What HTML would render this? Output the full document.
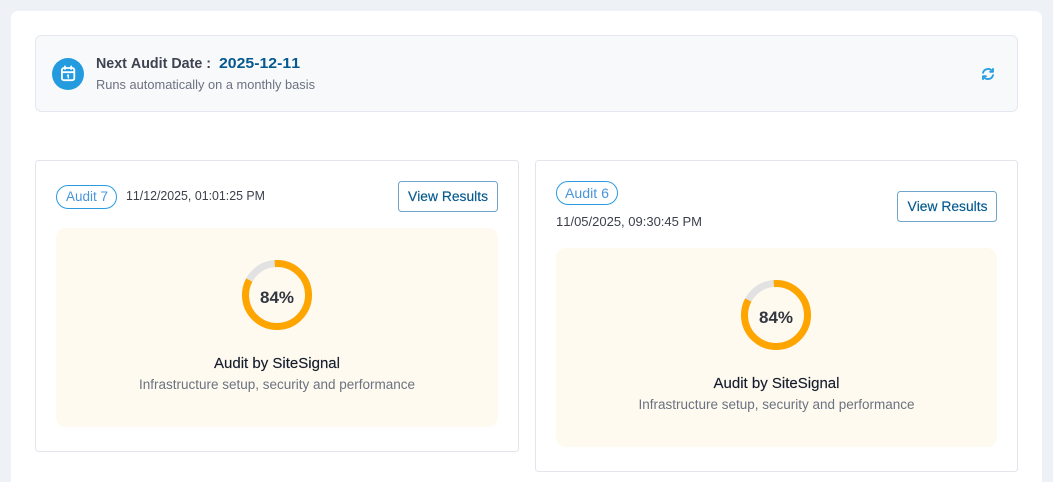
<!DOCTYPE html>
<html lang="en">
<head>
<meta charset="utf-8">
<title>Audits</title>
<style>
html,body{margin:0;padding:0;width:1053px;height:482px;overflow:hidden;background:#eef1f6;font-family:"Liberation Sans",sans-serif}
svg{position:absolute;left:0;top:0;display:block}
text{font-family:"Liberation Sans",sans-serif;font-kerning:none}
</style>
</head>
<body>
<svg width="1053" height="482" viewBox="0 0 1053 482" xmlns="http://www.w3.org/2000/svg">
  <rect x="11" y="11" width="1031" height="490" rx="7" fill="#fff"/>

  <!-- Header banner -->
  <rect x="35.5" y="35.5" width="982" height="76" rx="6" fill="#f8f9fb" stroke="#e4e7ef"/>
  <circle cx="68" cy="74" r="16" fill="#249bdf"/>
  <g fill="none" stroke="#fff" stroke-width="1.8" stroke-linecap="round" stroke-linejoin="round">
    <rect x="61.9" y="68" width="12.4" height="12.2" rx="2"/>
    <path d="M61.9 72.2H74.3M65 66.4V69M71.2 66.4V69" />
    <path d="M67.5 75.5L68.3 75V77.8" stroke-width="1.5"/>
  </g>
  <text x="96" y="68" font-size="14.5" font-weight="700" fill="#3d4350" textLength="115" lengthAdjust="spacingAndGlyphs">Next Audit Date :</text>
  <text x="219" y="68" font-size="15" font-weight="700" fill="#04598f" textLength="81" lengthAdjust="spacingAndGlyphs">2025-12-11</text>
  <text x="96" y="89" font-size="13" fill="#6b7280" textLength="219" lengthAdjust="spacingAndGlyphs">Runs automatically on a monthly basis</text>
  <g fill="none" stroke="#2ba0e2" stroke-width="1.9" stroke-linecap="round" stroke-linejoin="round">
    <path d="M983 72.8A5.2 5.2 0 0 1 992.4 71.4"/>
    <path d="M993 68.9V71.8H990.1"/>
    <path d="M993 75.2A5.2 5.2 0 0 1 983.6 76.6"/>
    <path d="M983 79.1V76.2H985.9"/>
  </g>

  <!-- Card 1 -->
  <rect x="35.5" y="160.5" width="483" height="291" rx="3" fill="#fff" stroke="#e2e5ec"/>
  <rect x="56.5" y="185.5" width="60" height="23" rx="11.5" fill="#fff" stroke="#2a9be0"/>
  <text x="66" y="201" font-size="13.5" fill="#4a94da" textLength="42" lengthAdjust="spacingAndGlyphs">Audit 7</text>
  <text x="126" y="200" font-size="13" fill="#3c414b" textLength="139" lengthAdjust="spacingAndGlyphs">11/12/2025, 01:01:25 PM</text>
  <rect x="398.5" y="181.5" width="99" height="30" rx="3" fill="#fff" stroke="#6fa5cb"/>
  <text x="408" y="201" font-size="13.5" fill="#04598f" stroke="#04598f" stroke-width=".15" textLength="80" lengthAdjust="spacingAndGlyphs">View Results</text>
  <rect x="56" y="228" width="442" height="199" rx="10" fill="#fffaef"/>
  <circle cx="277" cy="295" r="31.5" fill="none" stroke="#e2e2e2" stroke-width="7"/>
  <circle cx="277" cy="295" r="31.5" fill="none" stroke="#ffa500" stroke-width="7" pathLength="100" stroke-dasharray="84 16" transform="rotate(-94 277 295)"/>
  <text x="260" y="303" font-size="17" font-weight="700" fill="#32363f" textLength="34" lengthAdjust="spacingAndGlyphs">84%</text>
  <text x="214" y="368" font-size="14.5" fill="#141c2c" stroke="#141c2c" stroke-width=".15" textLength="126" lengthAdjust="spacingAndGlyphs">Audit by SiteSignal</text>
  <text x="139" y="389" font-size="13.5" fill="#6b7280" textLength="276" lengthAdjust="spacingAndGlyphs">Infrastructure setup, security and performance</text>

  <!-- Card 2 -->
  <rect x="535.5" y="160.5" width="482" height="311" rx="3" fill="#fff" stroke="#e2e5ec"/>
  <rect x="556.5" y="181.5" width="61" height="23" rx="11.5" fill="#fff" stroke="#2a9be0"/>
  <text x="565" y="198" font-size="13.5" fill="#4a94da" textLength="44" lengthAdjust="spacingAndGlyphs">Audit 6</text>
  <text x="556" y="226" font-size="13" fill="#3c414b" textLength="146" lengthAdjust="spacingAndGlyphs">11/05/2025, 09:30:45 PM</text>
  <rect x="897.5" y="191.5" width="99" height="30" rx="3" fill="#fff" stroke="#6fa5cb"/>
  <text x="907.5" y="211" font-size="13.5" fill="#04598f" stroke="#04598f" stroke-width=".15" textLength="80" lengthAdjust="spacingAndGlyphs">View Results</text>
  <rect x="556" y="248" width="441" height="199" rx="10" fill="#fffaef"/>
  <circle cx="776" cy="315" r="31.5" fill="none" stroke="#e2e2e2" stroke-width="7"/>
  <circle cx="776" cy="315" r="31.5" fill="none" stroke="#ffa500" stroke-width="7" pathLength="100" stroke-dasharray="84 16" transform="rotate(-94 776 315)"/>
  <text x="759" y="323" font-size="17" font-weight="700" fill="#32363f" textLength="34" lengthAdjust="spacingAndGlyphs">84%</text>
  <text x="713.5" y="388" font-size="14.5" fill="#141c2c" stroke="#141c2c" stroke-width=".15" textLength="126" lengthAdjust="spacingAndGlyphs">Audit by SiteSignal</text>
  <text x="638.5" y="409" font-size="13.5" fill="#6b7280" textLength="276" lengthAdjust="spacingAndGlyphs">Infrastructure setup, security and performance</text>
</svg>
</body>
</html>
